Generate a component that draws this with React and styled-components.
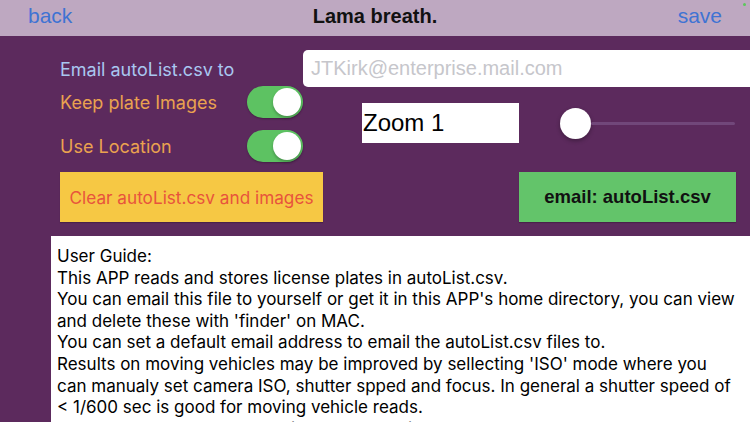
import React from "react";
import styled, { createGlobalStyle } from "styled-components";

const Global = createGlobalStyle`
  html, body { margin: 0; padding: 0; }
  body {
    width: 750px; height: 422px; overflow: hidden;
    background: #5c2a5d;
    font-family: Inter, "Liberation Sans", Arial, sans-serif;
  }
  #root { height: 422px; }
`;

const Screen = styled.div`
  position: relative;
  width: 750px;
  height: 422px;
  overflow: hidden;
  background: #5c2a5d;
  display: flex;
  flex-direction: column;
`;

const Header = styled.div`
  height: 36px;
  flex: none;
  background: #bea8c1;
  display: grid;
  grid-template-columns: 1fr auto 1fr;
  align-items: center;
  padding: 0 28px 0 28px;
`;

const NavLink = styled.span`
  font-family: "Liberation Sans", Arial, sans-serif;
  font-size: 21px;
  color: #3f73d3;
  justify-self: ${(p) => (p.$right ? "end" : "start")};
  margin-top: -4px;
`;

const Title = styled.span`
  font-family: "Liberation Sans", Arial, sans-serif;
  font-size: 20px;
  font-weight: 700;
  color: #111;
  margin-top: -4px;
`;

const StatusDot = styled.span`
  position: absolute;
  top: 3px;
  right: 4px;
  width: 3px;
  height: 3px;
  border-radius: 50%;
  background: #5ac85a;
`;

const Controls = styled.div`
  padding: 14px 0 0 60px;
  display: flex;
  flex-direction: column;
`;

const EmailRow = styled.div`
  display: flex;
  align-items: center;
  height: 37px;
`;

const Label = styled.span`
  font-size: 18px;
  color: ${(p) => p.$color};
  white-space: nowrap;
`;

const LabelCell = styled.div`
  width: 243px;
  flex: none;
  display: flex;
  align-items: center;
  padding-top: 1px;
`;

const EmailInput = styled.div`
  flex: 1;
  height: 37px;
  background: #fff;
  border-radius: 5px 0 0 5px;
  display: flex;
  align-items: center;
  padding-left: 8px;
  font-family: "Liberation Sans", Arial, sans-serif;
  font-size: 20px;
  color: #c6c6cb;
  white-space: nowrap;
`;

const MidRow = styled.div`
  display: flex;
  margin-top: -1px;
`;

const ToggleColumn = styled.div`
  width: 243px;
  flex: none;
  display: flex;
  flex-direction: column;
  gap: 12px;
`;

const ToggleRow = styled.div`
  height: 32px;
  display: flex;
  align-items: center;
  justify-content: space-between;
`;

const Switch = styled.div`
  position: relative;
  width: 56px;
  height: 32px;
  border-radius: 16px;
  background: #5dc262;
  box-shadow: 0 1px 2px rgba(0, 0, 0, 0.25);
`;

const Knob = styled.div`
  position: absolute;
  top: 2px;
  right: 2px;
  width: 28px;
  height: 28px;
  border-radius: 50%;
  background: #fff;
  box-shadow: 0 2px 3px rgba(0, 0, 0, 0.25);
`;

const ZoomBox = styled.div`
  margin: 17px 0 0 59px;
  width: 157px;
  height: 40px;
  background: #fff;
  display: flex;
  align-items: center;
  font-family: "Liberation Sans", Arial, sans-serif;
  font-size: 24px;
  color: #000;
  box-sizing: border-box;
  padding-left: 1px;
`;

const SliderWrap = styled.div`
  margin: 21px 0 0 41px;
  width: 175px;
  height: 32px;
  display: flex;
  align-items: center;
`;

const Thumb = styled.div`
  width: 31px;
  height: 31px;
  flex: none;
  border-radius: 50%;
  background: #fff;
  box-shadow: 0 2px 4px rgba(0, 0, 0, 0.3);
`;

const Track = styled.div`
  flex: 1;
  height: 3px;
  border-radius: 2px;
  background: #71477a;
`;

const ButtonRow = styled.div`
  display: flex;
  margin-top: 10px;
  height: 50px;
`;

const ActionButton = styled.div`
  width: ${(p) => p.$w}px;
  margin-left: ${(p) => p.$ml || 0}px;
  height: 50px;
  background: ${(p) => p.$bg};
  color: ${(p) => p.$fg};
  font-size: ${(p) => (p.$bold ? 18.5 : 17.2)}px;
  font-family: ${(p) => (p.$bold ? '"Liberation Sans", Arial, sans-serif' : "Inter, sans-serif")};
  font-weight: ${(p) => (p.$bold ? 700 : 400)};
  display: flex;
  align-items: center;
  justify-content: center;
  box-shadow: 0 1px 1px rgba(0, 0, 0, 0.2);
  white-space: nowrap;
`;

const GuideBox = styled.div`
  margin: 14px 0 0 51px;
  flex: 1;
  background: #fff;
  padding: 10px 0 0 6px;
  overflow: hidden;
`;

const GuideLine = styled.div`
  font-size: 17px;
  line-height: 21.6px;
  color: #000;
  white-space: nowrap;
`;

const guide = [
  "User Guide:",
  "This APP reads and stores license plates in autoList.csv.",
  "You can email this file to yourself or get it in this APP's home directory, you can view",
  "and delete these with 'finder' on MAC.",
  "You can set a default email address to email the autoList.csv files to.",
  "Results on moving vehicles may be improved by sellecting 'ISO' mode where you",
  "can manualy set camera ISO, shutter spped and focus. In general a shutter speed of",
  "< 1/600 sec is good for moving vehicle reads.",
  "You can set the zoom level with the zoom slider above.",
];

export default function App() {
  return (
    <Screen>
      <Global />
      <Header>
        <NavLink>back</NavLink>
        <Title>Lama breath.</Title>
        <NavLink $right>save</NavLink>
      </Header>
      <StatusDot />
      <Controls>
        <EmailRow>
          <LabelCell>
            <Label $color="#a9c7f0">Email autoList.csv to</Label>
          </LabelCell>
          <EmailInput>JTKirk@enterprise.mail.com</EmailInput>
        </EmailRow>
        <MidRow>
          <ToggleColumn>
            <ToggleRow>
              <Label $color="#eaa24f">Keep plate Images</Label>
              <Switch>
                <Knob />
              </Switch>
            </ToggleRow>
            <ToggleRow>
              <Label $color="#eaa24f">Use Location</Label>
              <Switch>
                <Knob />
              </Switch>
            </ToggleRow>
          </ToggleColumn>
          <ZoomBox>Zoom 1</ZoomBox>
          <SliderWrap>
            <Thumb />
            <Track />
          </SliderWrap>
        </MidRow>
        <ButtonRow>
          <ActionButton $w={263} $bg="#f6c844" $fg="#e8543c">
            Clear autoList.csv and images
          </ActionButton>
          <ActionButton $w={217} $ml={196} $bg="#63c46a" $fg="#111" $bold>
            email: autoList.csv
          </ActionButton>
        </ButtonRow>
      </Controls>
      <GuideBox>
        {guide.map((l, i) => (
          <GuideLine key={i}>{l}</GuideLine>
        ))}
      </GuideBox>
    </Screen>
  );
}
